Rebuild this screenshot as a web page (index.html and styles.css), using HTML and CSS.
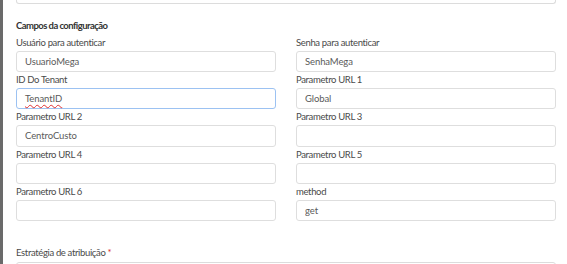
FILE: index.html
```html
<!DOCTYPE html>
<html>
<head>
  <meta charset="utf-8">
  <title>Campos da configuração</title>
  <link rel="stylesheet" href="styles.css">
</head>
<body>
  <div class="page">
    <div class="edge"></div>
    <div class="content">
      <div class="prev-box"></div>

      <h3 class="section-title">Campos da configuração</h3>

      <div class="fields">
        <div class="field">
          <label>Usuário para autenticar</label>
          <input type="text" value="UsuarioMega">
        </div>
        <div class="field">
          <label>Senha para autenticar</label>
          <input type="text" value="SenhaMega">
        </div>
        <div class="field">
          <label>ID Do Tenant</label>
          <div class="input focused"><span class="misspelled">TenantID</span></div>
        </div>
        <div class="field">
          <label>Parametro URL 1</label>
          <input type="text" value="Global">
        </div>
        <div class="field">
          <label>Parametro URL 2</label>
          <input type="text" value="CentroCusto">
        </div>
        <div class="field">
          <label>Parametro URL 3</label>
          <input type="text" value="">
        </div>
        <div class="field">
          <label>Parametro URL 4</label>
          <input type="text" value="">
        </div>
        <div class="field">
          <label>Parametro URL 5</label>
          <input type="text" value="">
        </div>
        <div class="field">
          <label>Parametro URL 6</label>
          <input type="text" value="">
        </div>
        <div class="field">
          <label>method</label>
          <input type="text" value="get">
        </div>
      </div>

      <div class="strategy">
        <label>Estratégia de atribuição <span class="req">*</span></label>
        <div class="select"></div>
      </div>
    </div>
  </div>
</body>
</html>
```

FILE: styles.css
```css
body {
  margin: 0;
  background-color: white;
  font-family: 'Lato', sans-serif;
  color: #4a4a4a;
}
.page {
  display: flex;
  height: 264px;
  overflow: hidden;
}
.edge {
  width: 3px;
  flex-shrink: 0;
  background-color: #6a6a6a;
}
.content {
  flex: 1;
  padding-left: 13px;
  padding-right: 11px;
}
.prev-box {
  height: 3px;
  border: 1px solid #dcdcdc;
  border-top: none;
  border-radius: 0 0 3px 3px;
}
.section-title {
  margin: 15px 0 0 0;
  font-size: 9.5px;
  line-height: 14px;
  font-weight: 700;
  letter-spacing: -0.55px;
  color: #333;
}
.fields {
  display: grid;
  grid-template-columns: 260px 260px;
  column-gap: 20px;
  margin-top: 2px;
}
.field label,
.strategy label {
  display: block;
  font-size: 9.5px;
  line-height: 16px;
  letter-spacing: -0.35px;
  color: #4a4a4a;
}
.field input,
.field .input {
  box-sizing: border-box;
  display: block;
  width: 100%;
  height: 21.2px;
  margin: 0;
  padding: 0 8px;
  border: 1px solid #dedede;
  border-radius: 3px;
  font-family: 'Lato', sans-serif;
  font-size: 9.5px;
  line-height: 19px;
  letter-spacing: -0.1px;
  color: #5a5a5a;
  background-color: white;
  outline: none;
}
.field .input.focused {
  border-color: #9cc2f2;
}
.misspelled {
  text-decoration: underline wavy #e03030;
  text-decoration-thickness: 1px;
  text-underline-offset: 2px;
}
.strategy {
  margin-top: 24px;
}
.req {
  color: #d93025;
}
.select {
  height: 20px;
  margin-top: 1px;
  border: 1px solid #dcdcdc;
  border-radius: 3px;
}
```
